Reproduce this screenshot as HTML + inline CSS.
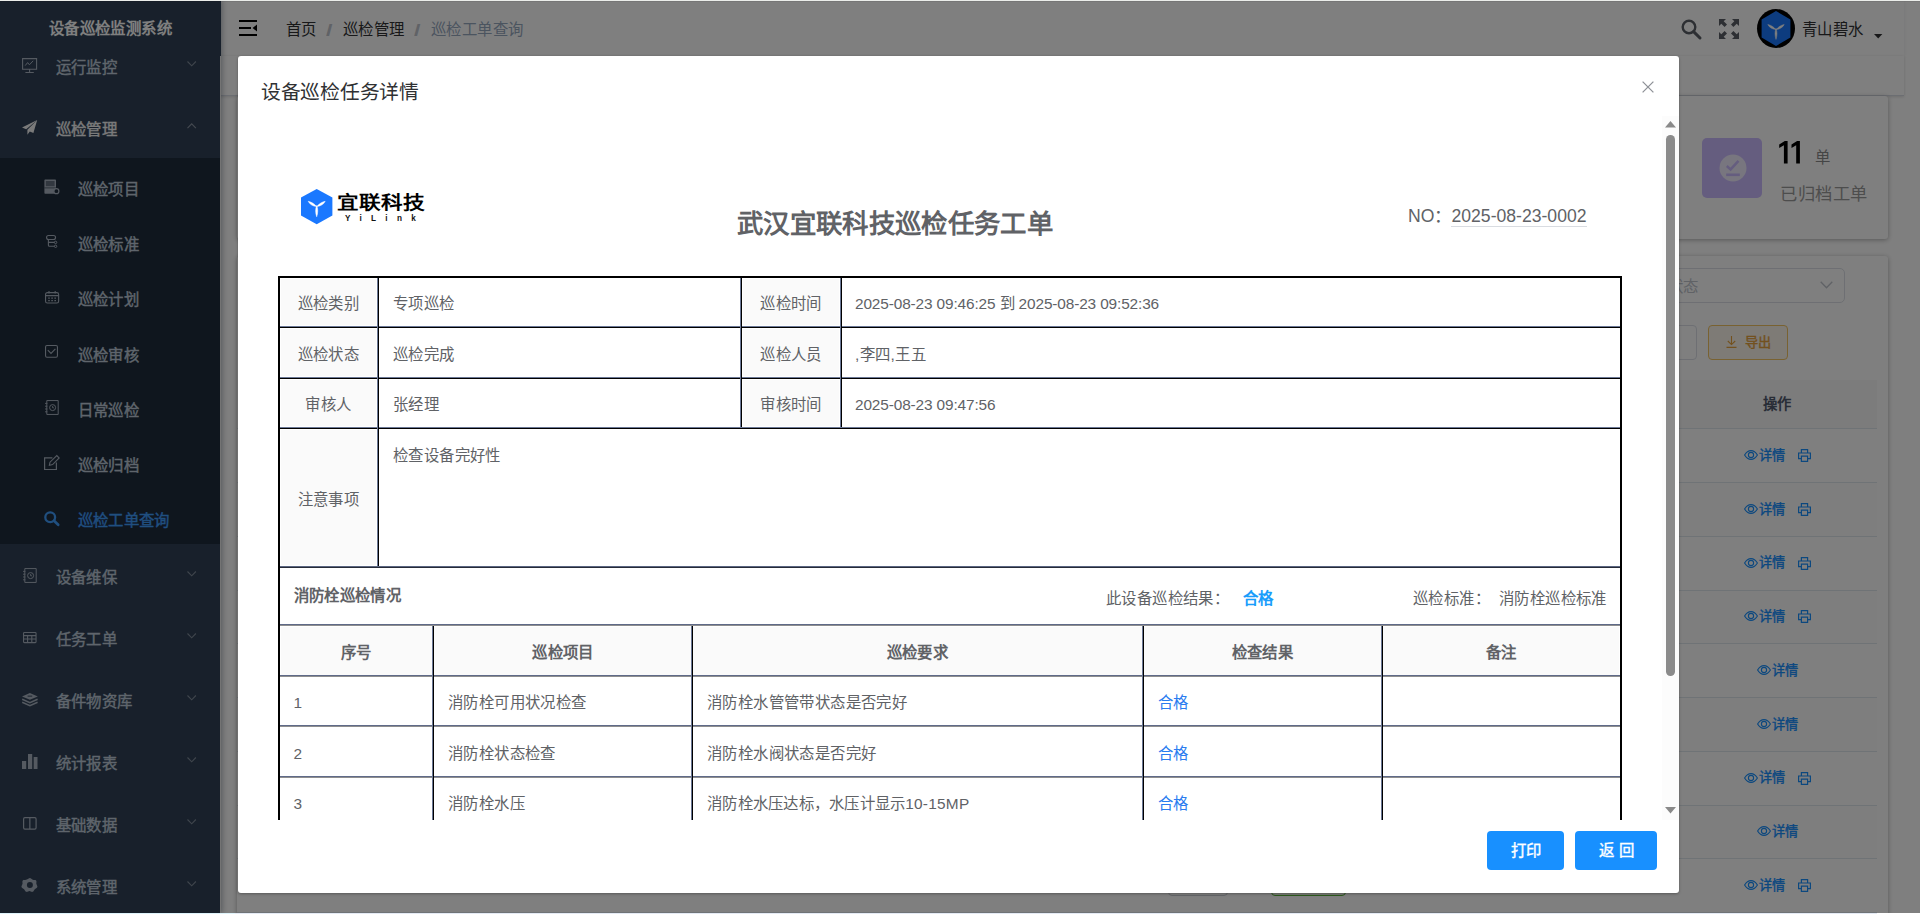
<!DOCTYPE html>
<html lang="zh-CN">
<head>
<meta charset="utf-8">
<title>设备巡检监测系统</title>
<style>
html,body{margin:0;padding:0}
body{width:1920px;height:914px;overflow:hidden;position:relative;background:#fff;font-family:"Liberation Sans",sans-serif;}
.b{position:absolute;box-sizing:border-box}
.t{position:absolute;white-space:nowrap;box-sizing:border-box}
svg{position:absolute;overflow:visible}
#page{position:absolute;left:0;top:0;width:1920px;height:914px;overflow:hidden;background:#fff}
#mask{position:absolute;left:0;top:0;width:1920px;height:914px;background:rgba(0,0,0,.5)}
#dlg{position:absolute;left:238px;top:56px;width:1441px;height:837px;background:#fff;border-radius:3px;box-shadow:0 1px 3px rgba(0,0,0,.3);overflow:hidden}
#sc{position:absolute;left:0;top:60px;width:1441px;height:704px;overflow:hidden}
</style>
</head>
<body>
<div id="page">

<div class="b" style="left:220px;top:0px;width:1684px;height:56px;background:#fff;box-shadow:0 1px 4px rgba(0,21,41,.08);"></div>
<div class="b" style="left:220px;top:56px;width:1684px;height:40px;background:#fff;border-bottom:1px solid #d8dce5;box-shadow:0 1px 3px 0 rgba(0,0,0,.12),0 0 3px 0 rgba(0,0,0,.04);"></div>
<svg style="left:239px;top:20px" width="18" height="16" viewBox="0 0 18 16"><path d="M0 0h18v2H0zM0 7h12v2H0zM0 14h18v2H0z" fill="#000"/><path d="M18 4.6v6.8L13.6 8z" fill="#000"/></svg>
<div class="t" style="left:286px;top:15.2px;height:30px;line-height:30px;font-size:15.4px;color:#303133;letter-spacing:0.4px;">首页</div>
<div class="t" style="left:325.6px;top:15.4px;height:30px;line-height:30px;font-size:16.5px;color:#c0c4cc;font-weight:bold;transform:scaleX(1.4);transform-origin:0 50%;">/</div>
<div class="t" style="left:343px;top:15.2px;height:30px;line-height:30px;font-size:15.4px;color:#303133;letter-spacing:0.4px;">巡检管理</div>
<div class="t" style="left:413.6px;top:15.4px;height:30px;line-height:30px;font-size:16.5px;color:#c0c4cc;font-weight:bold;transform:scaleX(1.4);transform-origin:0 50%;">/</div>
<div class="t" style="left:431px;top:15.2px;height:30px;line-height:30px;font-size:15.4px;color:#97a8be;letter-spacing:0.4px;">巡检工单查询</div>
<svg style="left:1681px;top:19px" width="20" height="20" viewBox="0 0 20 20"><circle cx="8" cy="8" r="6.3" fill="none" stroke="#5a5e66" stroke-width="2.4"/><path d="M12.6 12.6L19 19" stroke="#5a5e66" stroke-width="3" stroke-linecap="round"/></svg>
<svg style="left:1719px;top:19px" width="20" height="20" viewBox="0 0 20 20" fill="#5a5e66"><path d="M0 0h7L4.7 2.3 8 5.6 5.6 8 2.3 4.7 0 7zM20 0v7l-2.3-2.3L14.4 8 12 5.6l3.3-3.3L13 0zM0 20v-7l2.3 2.3L5.6 12 8 14.4l-3.3 3.3L7 20zM20 20h-7l2.3-2.3L12 14.4l2.4-2.4 3.3 3.3L20 13z"/></svg>
<svg style="left:1757px;top:9px" width="38" height="39" viewBox="0 0 38 39"><ellipse cx="19" cy="19.5" rx="19" ry="19.5" fill="#000"/><path d="M19 2L33.4 10.5V28.5L19 37 4.6 28.5V10.5z" fill="#1a78ff"/><path d="M19 20.6C16.6 17.8 14 16.200 10.800 15.500 12.200 18.400 15.200 20.200 19 20.600zM19 20.600C21.400 17.800 24 16.200 27.200 15.500 25.800 18.400 22.800 20.200 19 20.600zM19 19.400C20.400 23 20.200 26.600 19 30.400 17.800 26.600 17.600 23 19 19.400z" fill="#fff" stroke="#fff" stroke-width="0.5" stroke-linejoin="round"/></svg>
<div class="t" style="left:1802px;top:15.2px;height:30px;line-height:30px;font-size:15.4px;color:#303133;letter-spacing:0.4px;">青山碧水</div>
<svg style="left:1873.5px;top:33.5px" width="8.4" height="4.6" viewBox="0 0 8.4 4.6"><path d="M0 0h8.4L4.2 4.6z" fill="#303133"/></svg>
<div class="b" style="left:237px;top:96px;width:1651px;height:143px;background:#fff;box-shadow:0 1px 5px rgba(0,0,0,.32);border-radius:3px;"></div>
<div class="b" style="left:237px;top:256px;width:1651px;height:700px;background:#fff;box-shadow:0 1px 5px rgba(0,0,0,.32);border-radius:3px;"></div>
<div class="b" style="left:1702px;top:138px;width:60px;height:60px;background:#cabafe;border-radius:5px;"></div>
<svg style="left:1718.5px;top:153.5px" width="28" height="28" viewBox="0 0 28 28"><circle cx="14" cy="14" r="13.5" fill="#fff" fill-opacity=".72"/><path d="M7.8 12l3.8 3.4 7.9-8.6" stroke="#cabafe" stroke-width="2.5" fill="none"/><path d="M7.2 20.8h13.6" stroke="#cabafe" stroke-width="2.6"/></svg>
<svg style="left:1779.4px;top:140.8px" width="22" height="22.4" viewBox="0 0 22 22.4" role="img"><title>11</title><path d="M8.6 0V22.4H4.9V4.3L0.2 7V3.6L5.8 0zM20.9 0V22.4H17.2V4.3L12.5 7V3.6L18.1 0z" fill="#000"/></svg>
<div class="t" style="left:1815px;top:143.2px;height:30px;line-height:30px;font-size:15.4px;color:#8a8a8a;letter-spacing:0.4px;">单</div>
<div class="t" style="left:1780px;top:178.7px;height:30px;line-height:30px;font-size:17.3px;color:#9a9a9a;letter-spacing:0.5px;">已归档工单</div>
<div class="b" style="left:1400px;top:268px;width:445px;height:35px;background:#fff;border:1px solid #dcdfe6;border-radius:5px;"></div>
<div class="t" style="left:1668px;top:271.7px;height:30px;line-height:30px;font-size:15.4px;color:#c0c4cc;letter-spacing:0.4px;">状态</div>
<svg style="left:1820px;top:281px" width="13" height="8" viewBox="0 0 13 8"><path d="M0.7 0.7L6.5 6.8 12.3 0.7" stroke="#c0c4cc" stroke-width="1.3" fill="none"/></svg>
<div class="b" style="left:1600px;top:325px;width:97px;height:35px;background:#fff;border:1px solid #dcdfe6;border-radius:4px;"></div>
<div class="b" style="left:1708px;top:325px;width:80px;height:35px;background:#fdf6ec;border:1px solid #f3c463;border-radius:4px;"></div>
<svg style="left:1726px;top:336px" width="11" height="12" viewBox="0 0 11 12"><path d="M5.5 0v8.5M1.8 5l3.7 3.6L9.2 5M0.5 11.4h10" stroke="#e6a23c" stroke-width="1.1" fill="none"/></svg>
<div class="t" style="left:1744.5px;top:328.3px;height:30px;line-height:30px;font-size:13.2px;color:#e6a23c;-webkit-text-stroke:0.4px #e6a23c;">导出</div>
<div class="b" style="left:237px;top:380px;width:1640px;height:49px;background:#f8f8f9;border-bottom:1px solid #dfe6ec;"></div>
<div class="t" style="left:1727px;top:389.2px;height:30px;line-height:30px;font-size:14.3px;color:#515a6e;font-weight:bold;width:100px;text-align:center;">操作</div>
<div class="b" style="left:237px;top:482.0px;width:1640px;height:1px;background:#dfe6ec;"></div>
<svg style="left:1744px;top:450.2px" width="14" height="10" viewBox="0 0 14 10"><path d="M0.6 5C2.4 1.9 4.6 0.6 7 0.6S11.6 1.9 13.4 5C11.6 8.1 9.4 9.4 7 9.4S2.4 8.1 0.6 5z" fill="none" stroke="#1890ff" stroke-width="1.1"/><circle cx="7" cy="5" r="2.6" fill="none" stroke="#1890ff" stroke-width="1.1"/></svg>
<div class="t" style="left:1759px;top:440.9px;height:30px;line-height:30px;font-size:13.2px;color:#1890ff;-webkit-text-stroke:0.4px #1890ff;">详情</div>
<svg style="left:1798px;top:449.2px" width="13" height="13" viewBox="0 0 13 13"><path d="M3.4 4V0.6h6.2V4M3.4 9.6H0.6V4h11.8v5.6H9.6M3.4 7.2h6.2v5.2H3.4z" fill="none" stroke="#1890ff" stroke-width="1.2"/></svg>
<div class="b" style="left:237px;top:483.0px;width:1640px;height:52.74px;background:#fcfcfc;"></div>
<div class="b" style="left:237px;top:535.8px;width:1640px;height:1px;background:#dfe6ec;"></div>
<svg style="left:1744px;top:503.9px" width="14" height="10" viewBox="0 0 14 10"><path d="M0.6 5C2.4 1.9 4.6 0.6 7 0.6S11.6 1.9 13.4 5C11.6 8.1 9.4 9.4 7 9.4S2.4 8.1 0.6 5z" fill="none" stroke="#1890ff" stroke-width="1.1"/><circle cx="7" cy="5" r="2.6" fill="none" stroke="#1890ff" stroke-width="1.1"/></svg>
<div class="t" style="left:1759px;top:494.6px;height:30px;line-height:30px;font-size:13.2px;color:#1890ff;-webkit-text-stroke:0.4px #1890ff;">详情</div>
<svg style="left:1798px;top:502.9px" width="13" height="13" viewBox="0 0 13 13"><path d="M3.4 4V0.6h6.2V4M3.4 9.6H0.6V4h11.8v5.6H9.6M3.4 7.2h6.2v5.2H3.4z" fill="none" stroke="#1890ff" stroke-width="1.2"/></svg>
<div class="b" style="left:237px;top:589.5px;width:1640px;height:1px;background:#dfe6ec;"></div>
<svg style="left:1744px;top:557.7px" width="14" height="10" viewBox="0 0 14 10"><path d="M0.6 5C2.4 1.9 4.6 0.6 7 0.6S11.6 1.9 13.4 5C11.6 8.1 9.4 9.4 7 9.4S2.4 8.1 0.6 5z" fill="none" stroke="#1890ff" stroke-width="1.1"/><circle cx="7" cy="5" r="2.6" fill="none" stroke="#1890ff" stroke-width="1.1"/></svg>
<div class="t" style="left:1759px;top:548.4px;height:30px;line-height:30px;font-size:13.2px;color:#1890ff;-webkit-text-stroke:0.4px #1890ff;">详情</div>
<svg style="left:1798px;top:556.7px" width="13" height="13" viewBox="0 0 13 13"><path d="M3.4 4V0.6h6.2V4M3.4 9.6H0.6V4h11.8v5.6H9.6M3.4 7.2h6.2v5.2H3.4z" fill="none" stroke="#1890ff" stroke-width="1.2"/></svg>
<div class="b" style="left:237px;top:590.5px;width:1640px;height:52.74px;background:#fcfcfc;"></div>
<div class="b" style="left:237px;top:643.3px;width:1640px;height:1px;background:#dfe6ec;"></div>
<svg style="left:1744px;top:611.4px" width="14" height="10" viewBox="0 0 14 10"><path d="M0.6 5C2.4 1.9 4.6 0.6 7 0.6S11.6 1.9 13.4 5C11.6 8.1 9.4 9.4 7 9.4S2.4 8.1 0.6 5z" fill="none" stroke="#1890ff" stroke-width="1.1"/><circle cx="7" cy="5" r="2.6" fill="none" stroke="#1890ff" stroke-width="1.1"/></svg>
<div class="t" style="left:1759px;top:602.1px;height:30px;line-height:30px;font-size:13.2px;color:#1890ff;-webkit-text-stroke:0.4px #1890ff;">详情</div>
<svg style="left:1798px;top:610.4px" width="13" height="13" viewBox="0 0 13 13"><path d="M3.4 4V0.6h6.2V4M3.4 9.6H0.6V4h11.8v5.6H9.6M3.4 7.2h6.2v5.2H3.4z" fill="none" stroke="#1890ff" stroke-width="1.2"/></svg>
<div class="b" style="left:237px;top:697.0px;width:1640px;height:1px;background:#dfe6ec;"></div>
<svg style="left:1756.5px;top:665.2px" width="14" height="10" viewBox="0 0 14 10"><path d="M0.6 5C2.4 1.9 4.6 0.6 7 0.6S11.6 1.9 13.4 5C11.6 8.1 9.4 9.4 7 9.4S2.4 8.1 0.6 5z" fill="none" stroke="#1890ff" stroke-width="1.1"/><circle cx="7" cy="5" r="2.6" fill="none" stroke="#1890ff" stroke-width="1.1"/></svg>
<div class="t" style="left:1771.5px;top:655.9px;height:30px;line-height:30px;font-size:13.2px;color:#1890ff;-webkit-text-stroke:0.4px #1890ff;">详情</div>
<div class="b" style="left:237px;top:698.0px;width:1640px;height:52.74px;background:#fcfcfc;"></div>
<div class="b" style="left:237px;top:750.7px;width:1640px;height:1px;background:#dfe6ec;"></div>
<svg style="left:1756.5px;top:718.9px" width="14" height="10" viewBox="0 0 14 10"><path d="M0.6 5C2.4 1.9 4.6 0.6 7 0.6S11.6 1.9 13.4 5C11.6 8.1 9.4 9.4 7 9.4S2.4 8.1 0.6 5z" fill="none" stroke="#1890ff" stroke-width="1.1"/><circle cx="7" cy="5" r="2.6" fill="none" stroke="#1890ff" stroke-width="1.1"/></svg>
<div class="t" style="left:1771.5px;top:709.6px;height:30px;line-height:30px;font-size:13.2px;color:#1890ff;-webkit-text-stroke:0.4px #1890ff;">详情</div>
<div class="b" style="left:237px;top:804.5px;width:1640px;height:1px;background:#dfe6ec;"></div>
<svg style="left:1744px;top:772.6px" width="14" height="10" viewBox="0 0 14 10"><path d="M0.6 5C2.4 1.9 4.6 0.6 7 0.6S11.6 1.9 13.4 5C11.6 8.1 9.4 9.4 7 9.4S2.4 8.1 0.6 5z" fill="none" stroke="#1890ff" stroke-width="1.1"/><circle cx="7" cy="5" r="2.6" fill="none" stroke="#1890ff" stroke-width="1.1"/></svg>
<div class="t" style="left:1759px;top:763.3px;height:30px;line-height:30px;font-size:13.2px;color:#1890ff;-webkit-text-stroke:0.4px #1890ff;">详情</div>
<svg style="left:1798px;top:771.6px" width="13" height="13" viewBox="0 0 13 13"><path d="M3.4 4V0.6h6.2V4M3.4 9.6H0.6V4h11.8v5.6H9.6M3.4 7.2h6.2v5.2H3.4z" fill="none" stroke="#1890ff" stroke-width="1.2"/></svg>
<div class="b" style="left:237px;top:805.5px;width:1640px;height:52.74px;background:#fcfcfc;"></div>
<div class="b" style="left:237px;top:858.2px;width:1640px;height:1px;background:#dfe6ec;"></div>
<svg style="left:1756.5px;top:826.4px" width="14" height="10" viewBox="0 0 14 10"><path d="M0.6 5C2.4 1.9 4.6 0.6 7 0.6S11.6 1.9 13.4 5C11.6 8.1 9.4 9.4 7 9.4S2.4 8.1 0.6 5z" fill="none" stroke="#1890ff" stroke-width="1.1"/><circle cx="7" cy="5" r="2.6" fill="none" stroke="#1890ff" stroke-width="1.1"/></svg>
<div class="t" style="left:1771.5px;top:817.1px;height:30px;line-height:30px;font-size:13.2px;color:#1890ff;-webkit-text-stroke:0.4px #1890ff;">详情</div>
<div class="b" style="left:237px;top:912.0px;width:1640px;height:1px;background:#dfe6ec;"></div>
<svg style="left:1744px;top:880.1px" width="14" height="10" viewBox="0 0 14 10"><path d="M0.6 5C2.4 1.9 4.6 0.6 7 0.6S11.6 1.9 13.4 5C11.6 8.1 9.4 9.4 7 9.4S2.4 8.1 0.6 5z" fill="none" stroke="#1890ff" stroke-width="1.1"/><circle cx="7" cy="5" r="2.6" fill="none" stroke="#1890ff" stroke-width="1.1"/></svg>
<div class="t" style="left:1759px;top:870.8px;height:30px;line-height:30px;font-size:13.2px;color:#1890ff;-webkit-text-stroke:0.4px #1890ff;">详情</div>
<svg style="left:1798px;top:879.1px" width="13" height="13" viewBox="0 0 13 13"><path d="M3.4 4V0.6h6.2V4M3.4 9.6H0.6V4h11.8v5.6H9.6M3.4 7.2h6.2v5.2H3.4z" fill="none" stroke="#1890ff" stroke-width="1.2"/></svg>
<div class="b" style="left:1168px;top:865px;width:60px;height:31px;background:#fff;border:1px solid #c8ccd4;border-radius:4px;"></div>
<div class="b" style="left:1271px;top:865px;width:75px;height:31px;background:#f0f9eb;border:1px solid #58b43a;border-radius:4px;"></div>
<div class="b" style="left:0px;top:0px;width:220px;height:914px;background:#304156;box-shadow:2px 0 6px rgba(0,21,41,.35);"></div>
<div class="b" style="left:0px;top:158px;width:220px;height:385.7px;background:#1f2d3d;"></div>
<div class="b" style="left:220px;top:56px;width:1px;height:858px;background:#e9e9e9;"></div>
<svg style="left:22px;top:58px" width="15.2" height="15.2" viewBox="0 0 15.2 15.2"><path d="M0.6 0.6h14v10.6H0.6zM7.6 11.2v3M3.4 14.5h8.4" stroke="#aab4c2" stroke-width="1.1" fill="none"/><path d="M3.2 7.6l2.4-3 1.8 2.2 3.8-4" stroke="#aab4c2" stroke-width="1" fill="none"/></svg>
<div class="t" style="left:55.5px;top:53.0px;height:30px;line-height:30px;font-size:15.4px;color:#bfcbd9;-webkit-text-stroke:0.4px #bfcbd9;letter-spacing:0.4px;">运行监控</div>
<svg style="left:186.9px;top:60.9px" width="9.4" height="5.6" viewBox="0 0 9.4 5.6"><path d="M0.5 0.5L4.7 4.8 8.9 0.5" stroke="#7f8a99" stroke-width="1.1" fill="none"/></svg>
<div class="b" style="left:0px;top:0px;width:221px;height:56px;background:#304156;"></div>
<div class="t" style="left:0px;top:13.7px;height:30px;line-height:30px;font-size:15.4px;color:#fff;font-weight:bold;width:221px;text-align:center;letter-spacing:0.4px;">设备巡检监测系统</div>
<svg style="left:22.1px;top:120px" width="15.2" height="14.8" viewBox="0 0 15.2 14.8"><path d="M15.2 0L0 7.4l4.2 1.8zM15.2 0L5.4 9.8v5l2.4-3.4 3.6 1.6z" fill="#f4f4f5"/></svg>
<div class="t" style="left:55.5px;top:114.9px;height:30px;line-height:30px;font-size:15.4px;color:#f4f4f5;-webkit-text-stroke:0.4px #f4f4f5;letter-spacing:0.4px;">巡检管理</div>
<svg style="left:186.9px;top:122.6px" width="9.4" height="5.6" viewBox="0 0 9.4 5.6"><path d="M0.5 5.1L4.7 0.8 8.9 5.1" stroke="#8a94a2" stroke-width="1.1" fill="none"/></svg>
<svg style="left:43.9px;top:178.8px" width="15.3" height="15.1" viewBox="0 0 15.3 15.1"><path d="M0.4 1.2q0-.8.8-.8h10q.8 0 .8.800V14.700H1.200q-.8 0-.8-.8z" fill="#aab4c2"/><path d="M1.800 2h8.800v5.200H1.800z" fill="#1f2d3d" fill-opacity=".5"/><path d="M0.400 8.900h11.600" stroke="#1f2d3d" stroke-opacity=".6" stroke-width="1"/><circle cx="12.400" cy="12.200" r="2.500" fill="#1f2d3d" stroke="#aab4c2" stroke-width="1.200"/></svg>
<div class="t" style="left:77.5px;top:174.6px;height:30px;line-height:30px;font-size:15.4px;color:#bfcbd9;-webkit-text-stroke:0.4px #bfcbd9;letter-spacing:0.4px;">巡检项目</div>
<svg style="left:46px;top:235.1px" width="11.4" height="12.8" viewBox="0 0 11.4 12.8"><rect x="0.55" y="0.55" width="9" height="4" rx="2" fill="none" stroke="#aab4c2" stroke-width="1.1"/><path d="M2.4 4.5v5.8q0 1 1 1h5M2.4 7.4h6" fill="none" stroke="#aab4c2" stroke-width="1.1"/><circle cx="9.6" cy="7.4" r="1.2" fill="none" stroke="#aab4c2" stroke-width="1"/><circle cx="9.6" cy="11.3" r="1.2" fill="none" stroke="#aab4c2" stroke-width="1"/></svg>
<div class="t" style="left:77.5px;top:229.9px;height:30px;line-height:30px;font-size:15.4px;color:#bfcbd9;-webkit-text-stroke:0.4px #bfcbd9;letter-spacing:0.4px;">巡检标准</div>
<svg style="left:44.8px;top:290.6px" width="14.2" height="12.6" viewBox="0 0 14.2 12.6"><rect x="0.55" y="1.6" width="13.1" height="10.4" rx="1.8" fill="none" stroke="#aab4c2" stroke-width="1.1"/><path d="M0.6 4.6h13M4 0v2.6M10.2 0v2.6" stroke="#aab4c2" stroke-width="1.1"/><path d="M3.2 7.2h1.6M6.3 7.2h1.6M9.4 7.2H11M3.2 9.6h1.6M6.3 9.6h1.6M9.4 9.6H11" stroke="#aab4c2" stroke-width="1.2"/></svg>
<div class="t" style="left:77.5px;top:285.0px;height:30px;line-height:30px;font-size:15.4px;color:#bfcbd9;-webkit-text-stroke:0.4px #bfcbd9;letter-spacing:0.4px;">巡检计划</div>
<svg style="left:45.1px;top:345.1px" width="13" height="12.8" viewBox="0 0 13 12.8"><rect x="0.55" y="0.55" width="11.9" height="11.7" rx="1.4" fill="none" stroke="#aab4c2" stroke-width="1.1"/><path d="M2.8 5.2l3.2 3.2 4.4-4.6" stroke="#aab4c2" stroke-width="1.1" fill="none"/></svg>
<div class="t" style="left:77.5px;top:340.8px;height:30px;line-height:30px;font-size:15.4px;color:#bfcbd9;-webkit-text-stroke:0.4px #bfcbd9;letter-spacing:0.4px;">巡检审核</div>
<svg style="left:45.3px;top:400px" width="13.8" height="15" viewBox="0 0 13.8 15"><path d="M1.8 0.55h11.4v13.9H1.8z" fill="none" stroke="#aab4c2" stroke-width="1"/><circle cx="7.6" cy="7.6" r="3" fill="none" stroke="#aab4c2" stroke-width="1"/><path d="M7.6 6v1.8h1.4M0 3.4h2.4M0 6.2h2.4M0 9h2.4M0 11.8h2.4" stroke="#aab4c2" stroke-width="0.9" fill="none"/></svg>
<div class="t" style="left:77.5px;top:396.1px;height:30px;line-height:30px;font-size:15.4px;color:#bfcbd9;-webkit-text-stroke:0.4px #bfcbd9;letter-spacing:0.4px;">日常巡检</div>
<svg style="left:44px;top:455.2px" width="15.9" height="15.1" viewBox="0 0 15.9 15.1"><path d="M8.4 2.8H0.6v11.7h11.8V7.4" fill="none" stroke="#aab4c2" stroke-width="1.2"/><path d="M5.4 10.2l0.6-3L12.8 0.6l2.4 2.4-6.6 6.6z" fill="none" stroke="#aab4c2" stroke-width="1.1"/></svg>
<div class="t" style="left:77.5px;top:450.7px;height:30px;line-height:30px;font-size:15.4px;color:#bfcbd9;-webkit-text-stroke:0.4px #bfcbd9;letter-spacing:0.4px;">巡检归档</div>
<svg style="left:44px;top:510.5px" width="15.6" height="15.1" viewBox="0 0 15.6 15.1"><circle cx="6.2" cy="6.2" r="4.9" fill="none" stroke="#409eff" stroke-width="2.3"/><path d="M10 9.8l4.2 4" stroke="#409eff" stroke-width="2.7" stroke-linecap="round"/></svg>
<div class="t" style="left:77.5px;top:506.0px;height:30px;line-height:30px;font-size:15.4px;color:#409eff;-webkit-text-stroke:0.4px #409eff;letter-spacing:0.4px;">巡检工单查询</div>
<svg style="left:23.1px;top:568px" width="13.8" height="15" viewBox="0 0 13.8 15"><path d="M1.8 0.55h11.4v13.9H1.8z" fill="none" stroke="#aab4c2" stroke-width="1"/><circle cx="7.6" cy="7.6" r="3" fill="none" stroke="#aab4c2" stroke-width="1"/><path d="M7.6 6v1.8h1.4M0 3.4h2.4M0 6.2h2.4M0 9h2.4M0 11.8h2.4" stroke="#aab4c2" stroke-width="0.9" fill="none"/></svg>
<div class="t" style="left:55.5px;top:563.3px;height:30px;line-height:30px;font-size:15.4px;color:#bfcbd9;-webkit-text-stroke:0.4px #bfcbd9;letter-spacing:0.4px;">设备维保</div>
<svg style="left:186.9px;top:571.2px" width="9.4" height="5.6" viewBox="0 0 9.4 5.6"><path d="M0.5 0.5L4.7 4.8 8.9 0.5" stroke="#7f8a99" stroke-width="1.1" fill="none"/></svg>
<svg style="left:23.1px;top:632.4px" width="13.6" height="11.2" viewBox="0 0 13.6 11.2"><rect x="0.55" y="0.55" width="12.5" height="10.1" rx="0.8" fill="none" stroke="#aab4c2" stroke-width="1.1"/><path d="M0.6 3.6h12.4M0.6 7h12.4M4.6 3.6v7M8.8 3.6v7" stroke="#aab4c2" stroke-width="1.1"/></svg>
<div class="t" style="left:55.5px;top:625.2px;height:30px;line-height:30px;font-size:15.4px;color:#bfcbd9;-webkit-text-stroke:0.4px #bfcbd9;letter-spacing:0.4px;">任务工单</div>
<svg style="left:186.9px;top:633.1px" width="9.4" height="5.6" viewBox="0 0 9.4 5.6"><path d="M0.5 0.5L4.7 4.8 8.9 0.5" stroke="#7f8a99" stroke-width="1.1" fill="none"/></svg>
<svg style="left:21.8px;top:692.6px" width="15.8" height="13.9" viewBox="0 0 15.8 13.9"><path d="M7.9 0L15.8 3.4 7.9 6.8 0 3.4z" fill="#aab4c2"/><path d="M5.6 2.4h4.6v1.6H5.6z" fill="#304156" fill-opacity=".6"/><path d="M0.2 6.2L7.9 9.6l7.7-3.4M0.2 9.2L7.9 12.6l7.7-3.4" stroke="#aab4c2" stroke-width="1.5" fill="none"/></svg>
<div class="t" style="left:55.5px;top:687.0px;height:30px;line-height:30px;font-size:15.4px;color:#bfcbd9;-webkit-text-stroke:0.4px #bfcbd9;letter-spacing:0.4px;">备件物资库</div>
<svg style="left:186.9px;top:694.9px" width="9.4" height="5.6" viewBox="0 0 9.4 5.6"><path d="M0.5 0.5L4.7 4.8 8.9 0.5" stroke="#7f8a99" stroke-width="1.1" fill="none"/></svg>
<svg style="left:21.8px;top:754px" width="15.5" height="15.1" viewBox="0 0 15.5 15.1"><path d="M0 7h4.2v8.1H0zM6 0h4.2v15.1H6zM11.7 3h3.8v12.1h-3.8z" fill="#aab4c2"/></svg>
<div class="t" style="left:55.5px;top:748.9px;height:30px;line-height:30px;font-size:15.4px;color:#bfcbd9;-webkit-text-stroke:0.4px #bfcbd9;letter-spacing:0.4px;">统计报表</div>
<svg style="left:186.9px;top:756.8px" width="9.4" height="5.6" viewBox="0 0 9.4 5.6"><path d="M0.5 0.5L4.7 4.8 8.9 0.5" stroke="#7f8a99" stroke-width="1.1" fill="none"/></svg>
<svg style="left:22.9px;top:817.3px" width="13.7" height="12.7" viewBox="0 0 13.7 12.7"><rect x="0.6" y="0.6" width="12.5" height="11.5" rx="1.3" fill="none" stroke="#aab4c2" stroke-width="1.2"/><path d="M6.85 0.6v11.5" stroke="#aab4c2" stroke-width="1.2"/></svg>
<div class="t" style="left:55.5px;top:811.1px;height:30px;line-height:30px;font-size:15.4px;color:#bfcbd9;-webkit-text-stroke:0.4px #bfcbd9;letter-spacing:0.4px;">基础数据</div>
<svg style="left:186.9px;top:819.0px" width="9.4" height="5.6" viewBox="0 0 9.4 5.6"><path d="M0.5 0.5L4.7 4.8 8.9 0.5" stroke="#7f8a99" stroke-width="1.1" fill="none"/></svg>
<svg style="left:21.8px;top:876.6px" width="15.8" height="15.8" viewBox="0 0 15.8 15.8"><path d="M7.9 0.2c1.2 0 2 1.5 3.2 1.8 1.3.4 2.8-.2 3.6.8.9 1 .1 2.400.300 3.700.2 1.300 1.500 2.300 1.100 3.500-.400 1.200-1.900 1.500-2.800 2.400-.900.900-1.200 2.500-2.400 2.900-1.200.400-2.300-.800-3.500-.800s-2.300 1.200-3.500.800c-1.200-.400-1.500-2-2.400-2.900C.6 11.500-.900 11.200-1.300 10c-.4-1.200.9-2.200 1.100-3.500.2-1.300-.6-2.700.3-3.700.8-1 2.300-.4 3.600-.8C5.900 1.700 6.700.2 7.900.2z" fill="#aab4c2" transform="translate(0.7,0.9) scale(0.91)"/><circle cx="7.9" cy="7.9" r="3" fill="#304156"/></svg>
<div class="t" style="left:55.5px;top:873.0px;height:30px;line-height:30px;font-size:15.4px;color:#bfcbd9;-webkit-text-stroke:0.4px #bfcbd9;letter-spacing:0.4px;">系统管理</div>
<svg style="left:186.9px;top:880.9px" width="9.4" height="5.6" viewBox="0 0 9.4 5.6"><path d="M0.5 0.5L4.7 4.8 8.9 0.5" stroke="#7f8a99" stroke-width="1.1" fill="none"/></svg>
</div>
<div id="mask"></div>

<div class="b" style="left:0px;top:0px;width:1920px;height:1px;background:#ebedea;"></div>
<div class="b" style="left:0px;top:1px;width:1920px;height:1px;background:rgba(0,0,0,.07);"></div>
<div class="b" style="left:0px;top:913px;width:1920px;height:1px;background:#fff;"></div>
<div class="b" style="left:0px;top:913px;width:1877px;height:1px;background:#e4eaf4;"></div>
<div class="b" style="left:0px;top:913px;width:235px;height:1px;background:#def3fa;"></div>
<div id="dlg">

<div class="t" style="left:23px;top:18.4px;height:36px;line-height:36px;font-size:19.8px;color:#303133;letter-spacing:-0.3px;">设备巡检任务详情</div>
<svg style="left:1404px;top:25.3px" width="12" height="12" viewBox="0 0 12 12"><path d="M0.6 0.6l10.8 10.8M11.4 0.6L0.6 11.4" stroke="#909399" stroke-width="1.3"/></svg>
<div id="sc">

<svg style="left:62.89999999999998px;top:72.69999999999999px" width="31.4" height="35.2" viewBox="0 0 31.4 35.2"><path d="M15.7 0L31.4 8.6V26.6L15.7 35.2 0 26.6V8.6z" fill="#1a78ff"/><path d="M15.7 17.6C13 14.6 10.4 13 7.2 12.3 8.6 15.2 11.6 17.2 15.7 17.6zM15.7 17.6C18.4 14.6 21 13 24.2 12.3 22.8 15.2 19.8 17.2 15.7 17.6zM15.7 16.4C17.2 20 17 24 15.7 27.8 14.4 24 14.2 20 15.7 16.4z" fill="#fff" stroke="#fff" stroke-width="0.5" stroke-linejoin="round"/></svg>
<div class="t" style="left:99px;top:71.9px;height:30px;line-height:30px;font-size:21.6px;color:#000;font-weight:bold;transform:scaleY(.84);transform-origin:0 50%;">宜联科技</div>
<div class="t" style="left:107px;top:96.7px;height:12px;line-height:12px;font-size:8.2px;color:#111;font-weight:bold;letter-spacing:9.3px;">YiLink</div>
<div class="t" style="left:499px;top:87.9px;height:40px;line-height:40px;font-size:26.4px;color:#606266;font-weight:bold;letter-spacing:0.35px;">武汉宜联科技巡检任务工单</div>
<div class="t" style="left:1170px;top:85.2px;height:30px;line-height:30px;font-size:17.6px;color:#606266;">NO：</div>
<div class="t" style="left:1213.5px;top:85.2px;height:30px;line-height:30px;font-size:17.6px;color:#606266;">2025-08-23-0002</div>
<div class="b" style="left:1213px;top:110px;width:136px;height:1px;background:#d9dce1;"></div>
<div class="b" style="left:43px;top:163px;width:95px;height:46px;background:#fafafa;"></div>
<div class="b" style="left:43px;top:213px;width:95px;height:47px;background:#fafafa;"></div>
<div class="b" style="left:43px;top:264px;width:95px;height:46px;background:#fafafa;"></div>
<div class="b" style="left:43px;top:314px;width:95px;height:135px;background:#fafafa;"></div>
<div class="b" style="left:505px;top:163px;width:96px;height:46px;background:#fafafa;"></div>
<div class="b" style="left:505px;top:213px;width:96px;height:47px;background:#fafafa;"></div>
<div class="b" style="left:505px;top:264px;width:96px;height:46px;background:#fafafa;"></div>
<div class="b" style="left:40px;top:160px;width:1344px;height:2px;background:#000;"></div>
<div class="b" style="left:40px;top:160px;width:2px;height:560px;background:#000;"></div>
<div class="b" style="left:1382px;top:160px;width:2px;height:560px;background:#000;"></div>
<div class="b" style="left:42px;top:210px;width:1340px;height:1px;background:#6b7896;"></div><div class="b" style="left:42px;top:211px;width:1340px;height:1px;background:#000;"></div>
<div class="b" style="left:42px;top:261px;width:1340px;height:1px;background:#6b7896;"></div><div class="b" style="left:42px;top:262px;width:1340px;height:1px;background:#000;"></div>
<div class="b" style="left:42px;top:311px;width:1340px;height:1px;background:#6b7896;"></div><div class="b" style="left:42px;top:312px;width:1340px;height:1px;background:#000;"></div>
<div class="b" style="left:139px;top:162px;width:1px;height:288px;background:#6b7896;"></div><div class="b" style="left:140px;top:162px;width:1px;height:288px;background:#000;"></div>
<div class="b" style="left:502px;top:162px;width:1px;height:149px;background:#6b7896;"></div><div class="b" style="left:503px;top:162px;width:1px;height:149px;background:#000;"></div>
<div class="b" style="left:602px;top:162px;width:1px;height:149px;background:#6b7896;"></div><div class="b" style="left:603px;top:162px;width:1px;height:149px;background:#000;"></div>
<div class="t" style="left:42px;top:173.0px;height:30px;line-height:30px;font-size:15.4px;color:#606266;width:97px;text-align:center;letter-spacing:0.4px;">巡检类别</div>
<div class="t" style="left:504px;top:173.0px;height:30px;line-height:30px;font-size:15.4px;color:#606266;width:98px;text-align:center;letter-spacing:0.4px;">巡检时间</div>
<div class="t" style="left:155px;top:173.0px;height:30px;line-height:30px;font-size:15.4px;color:#606266;letter-spacing:0.4px;">专项巡检</div>
<div class="t" style="left:617px;top:173.0px;height:30px;line-height:30px;font-size:15.4px;color:#606266;letter-spacing:-0.13px;">2025-08-23 09:46:25 到 2025-08-23 09:52:36</div>
<div class="t" style="left:42px;top:223.7px;height:30px;line-height:30px;font-size:15.4px;color:#606266;width:97px;text-align:center;letter-spacing:0.4px;">巡检状态</div>
<div class="t" style="left:504px;top:223.7px;height:30px;line-height:30px;font-size:15.4px;color:#606266;width:98px;text-align:center;letter-spacing:0.4px;">巡检人员</div>
<div class="t" style="left:155px;top:223.7px;height:30px;line-height:30px;font-size:15.4px;color:#606266;letter-spacing:0.4px;">巡检完成</div>
<div class="t" style="left:617px;top:223.7px;height:30px;line-height:30px;font-size:15.4px;color:#606266;letter-spacing:0.4px;">,李四,王五</div>
<div class="t" style="left:42px;top:274.0px;height:30px;line-height:30px;font-size:15.4px;color:#606266;width:97px;text-align:center;letter-spacing:0.4px;">审核人</div>
<div class="t" style="left:504px;top:274.0px;height:30px;line-height:30px;font-size:15.4px;color:#606266;width:98px;text-align:center;letter-spacing:0.4px;">审核时间</div>
<div class="t" style="left:155px;top:274.0px;height:30px;line-height:30px;font-size:15.4px;color:#606266;letter-spacing:0.4px;">张经理</div>
<div class="t" style="left:617px;top:274.0px;height:30px;line-height:30px;font-size:15.4px;color:#606266;letter-spacing:-0.13px;">2025-08-23 09:47:56</div>
<div class="t" style="left:42px;top:368.7px;height:30px;line-height:30px;font-size:15.4px;color:#606266;width:97px;text-align:center;letter-spacing:0.4px;">注意事项</div>
<div class="t" style="left:155px;top:325.0px;height:30px;line-height:30px;font-size:15.4px;color:#606266;letter-spacing:0.4px;">检查设备完好性</div>
<div class="b" style="left:42px;top:450px;width:1340px;height:1px;background:#5b6681;"></div><div class="b" style="left:42px;top:451px;width:1340px;height:1px;background:#262b38;"></div>
<div class="t" style="left:55.5px;top:464.7px;height:30px;line-height:30px;font-size:15.4px;color:#606266;font-weight:bold;letter-spacing:0.4px;">消防栓巡检情况</div>
<div class="t" style="left:868px;top:468.2px;height:30px;line-height:30px;font-size:15.4px;color:#606266;letter-spacing:0.4px;">此设备巡检结果：</div>
<div class="t" style="left:1005px;top:468.2px;height:30px;line-height:30px;font-size:15.4px;color:#1a9dfb;font-weight:bold;letter-spacing:0.4px;">合格</div>
<div class="t" style="left:1175px;top:468.2px;height:30px;line-height:30px;font-size:15.4px;color:#606266;letter-spacing:0.4px;">巡检标准：</div>
<div class="t" style="left:1261px;top:468.2px;height:30px;line-height:30px;font-size:15.4px;color:#606266;letter-spacing:0.4px;">消防栓巡检标准</div>
<div class="b" style="left:43px;top:511px;width:1338px;height:48px;background:#fafafa;"></div>
<div class="b" style="left:42px;top:508px;width:1340px;height:1px;background:#5f6a88;"></div><div class="b" style="left:42px;top:509px;width:1340px;height:1px;background:#8e8e8e;"></div>
<div class="b" style="left:42px;top:559px;width:1340px;height:1px;background:#5f6a88;"></div><div class="b" style="left:42px;top:560px;width:1340px;height:1px;background:#8e8e8e;"></div>
<div class="b" style="left:42px;top:609px;width:1340px;height:1px;background:#5f6a88;"></div><div class="b" style="left:42px;top:610px;width:1340px;height:1px;background:#8e8e8e;"></div>
<div class="b" style="left:42px;top:660px;width:1340px;height:1px;background:#5f6a88;"></div><div class="b" style="left:42px;top:661px;width:1340px;height:1px;background:#8e8e8e;"></div>
<div class="b" style="left:42px;top:710px;width:1340px;height:1px;background:#5f6a88;"></div><div class="b" style="left:42px;top:711px;width:1340px;height:1px;background:#8e8e8e;"></div>
<div class="b" style="left:194px;top:510px;width:1px;height:214px;background:#6b7896;"></div><div class="b" style="left:195px;top:510px;width:1px;height:214px;background:#000;"></div>
<div class="b" style="left:453px;top:510px;width:1px;height:214px;background:#6b7896;"></div><div class="b" style="left:454px;top:510px;width:1px;height:214px;background:#000;"></div>
<div class="b" style="left:904px;top:510px;width:1px;height:214px;background:#6b7896;"></div><div class="b" style="left:905px;top:510px;width:1px;height:214px;background:#000;"></div>
<div class="b" style="left:1143px;top:510px;width:1px;height:214px;background:#6b7896;"></div><div class="b" style="left:1144px;top:510px;width:1px;height:214px;background:#000;"></div>
<div class="t" style="left:58px;top:522.0px;height:30px;line-height:30px;font-size:15.4px;color:#606266;font-weight:bold;width:120px;text-align:center;letter-spacing:0.4px;">序号</div>
<div class="t" style="left:265px;top:522.0px;height:30px;line-height:30px;font-size:15.4px;color:#606266;font-weight:bold;width:120px;text-align:center;letter-spacing:0.4px;">巡检项目</div>
<div class="t" style="left:619.5px;top:522.0px;height:30px;line-height:30px;font-size:15.4px;color:#606266;font-weight:bold;width:120px;text-align:center;letter-spacing:0.4px;">巡检要求</div>
<div class="t" style="left:964.5px;top:522.0px;height:30px;line-height:30px;font-size:15.4px;color:#606266;font-weight:bold;width:120px;text-align:center;letter-spacing:0.4px;">检查结果</div>
<div class="t" style="left:1203.5px;top:522.0px;height:30px;line-height:30px;font-size:15.4px;color:#606266;font-weight:bold;width:120px;text-align:center;letter-spacing:0.4px;">备注</div>
<div class="t" style="left:55.5px;top:572.0px;height:30px;line-height:30px;font-size:15.4px;color:#606266;">1</div>
<div class="t" style="left:210px;top:572.0px;height:30px;line-height:30px;font-size:15.4px;color:#606266;letter-spacing:0.4px;">消防栓可用状况检查</div>
<div class="t" style="left:469px;top:572.0px;height:30px;line-height:30px;font-size:15.4px;color:#606266;letter-spacing:0.4px;">消防栓水管管带状态是否完好</div>
<div class="t" style="left:920px;top:572.0px;height:30px;line-height:30px;font-size:15.4px;color:#2a7cf0;letter-spacing:0.4px;">合格</div>
<div class="t" style="left:55.5px;top:622.7px;height:30px;line-height:30px;font-size:15.4px;color:#606266;">2</div>
<div class="t" style="left:210px;top:622.7px;height:30px;line-height:30px;font-size:15.4px;color:#606266;letter-spacing:0.4px;">消防栓状态检查</div>
<div class="t" style="left:469px;top:622.7px;height:30px;line-height:30px;font-size:15.4px;color:#606266;letter-spacing:0.4px;">消防栓水阀状态是否完好</div>
<div class="t" style="left:920px;top:622.7px;height:30px;line-height:30px;font-size:15.4px;color:#2a7cf0;letter-spacing:0.4px;">合格</div>
<div class="t" style="left:55.5px;top:673.0px;height:30px;line-height:30px;font-size:15.4px;color:#606266;">3</div>
<div class="t" style="left:210px;top:673.0px;height:30px;line-height:30px;font-size:15.4px;color:#606266;letter-spacing:0.4px;">消防栓水压</div>
<div class="t" style="left:469px;top:673.0px;height:30px;line-height:30px;font-size:15.4px;color:#606266;letter-spacing:0.25px;">消防栓水压达标，水压计显示10-15MP</div>
<div class="t" style="left:920px;top:673.0px;height:30px;line-height:30px;font-size:15.4px;color:#2a7cf0;letter-spacing:0.4px;">合格</div>
</div>

<div class="b" style="left:1424px;top:60px;width:17px;height:704px;background:#fcfcfc;"></div>
<svg style="left:1427.4px;top:64.8px" width="11" height="6.4" viewBox="0 0 11 6.4"><path d="M0 6.4L5.5 0 11 6.4z" fill="#8a8a8a"/></svg>
<svg style="left:1427.4px;top:751.2px" width="11" height="6.4" viewBox="0 0 11 6.4"><path d="M0 0L5.5 6.4 11 0z" fill="#8a8a8a"/></svg>
<div class="b" style="left:1428.1px;top:79px;width:8.8px;height:541px;background:#8b8b8b;border-radius:4.4px;"></div>
<div class="b" style="left:1249px;top:775px;width:77px;height:39px;background:#1890ff;border-radius:4px;"></div>
<div class="b" style="left:1337px;top:775px;width:82px;height:39px;background:#1890ff;border-radius:4px;"></div>
<div class="t" style="left:1250px;top:780.3px;height:30px;line-height:30px;font-size:15.4px;color:#fff;-webkit-text-stroke:0.4px #fff;width:77px;text-align:center;letter-spacing:0.4px;">打印</div>
<div class="t" style="left:1338px;top:780.3px;height:30px;line-height:30px;font-size:15.4px;color:#fff;-webkit-text-stroke:0.4px #fff;width:82px;text-align:center;letter-spacing:0.4px;">返 回</div>
</div>
</body>
</html>
